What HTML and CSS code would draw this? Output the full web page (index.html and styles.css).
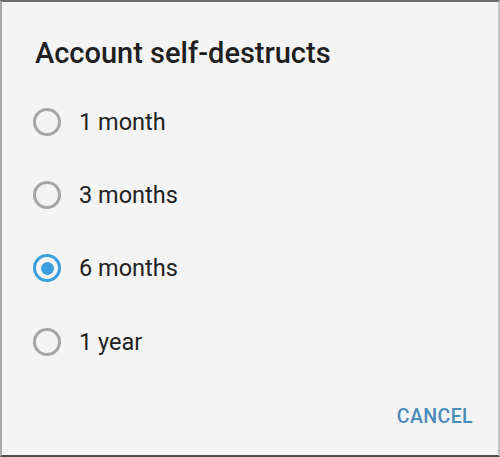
FILE: index.html
```html
<!DOCTYPE html>
<html>
<head>
<meta charset="utf-8">
<link rel="stylesheet" href="styles.css">
</head>
<body>
<div class="dialog">
  <h1 class="title">Account self-destructs</h1>
  <div class="options">
    <div class="option"><span class="radio"></span><span class="label">1 month</span></div>
    <div class="option"><span class="radio"></span><span class="label">3 months</span></div>
    <div class="option"><span class="radio checked"></span><span class="label">6 months</span></div>
    <div class="option"><span class="radio"></span><span class="label">1 year</span></div>
  </div>
  <div class="actions"><span class="btn">CANCEL</span></div>
</div>
</body>
</html>
```
FILE: styles.css
```css
html, body {
  margin: 0;
  padding: 0;
}
body {
  width: 500px;
  height: 457px;
  font-family: Roboto, "Liberation Sans", sans-serif;
  background: #f4f4f4;
}
.dialog {
  box-sizing: border-box;
  width: 500px;
  height: 457px;
  background: #f4f4f4;
  border-top: 2px solid #6a6a6a;
  border-left: 2px solid #a8a8a8;
  border-right: 2px solid #c4c4c4;
  border-bottom: 2px solid #4e4e4e;
  display: flex;
  flex-direction: column;
}
.title {
  margin: 0;
  padding: 34px 0 0 33px;
  font-size: 29px;
  line-height: 34px;
  font-weight: 500;
  color: #1f1f1f;
}
.options {
  margin-top: 15px;
  display: flex;
  flex-direction: column;
}
.option {
  height: 73.3px;
  display: flex;
  align-items: center;
  padding-left: 31px;
}
.radio {
  box-sizing: border-box;
  width: 28px;
  height: 28px;
  border: 3px solid #a6a6a6;
  border-radius: 50%;
  display: flex;
  align-items: center;
  justify-content: center;
  flex: none;
}
.radio.checked {
  border-color: #3a9fdc;
}
.radio.checked::after {
  content: "";
  width: 13px;
  height: 13px;
  border-radius: 50%;
  background: #3a9fdc;
}
.label {
  margin-left: 18px;
  font-size: 23.5px;
  color: #222222;
}
.actions {
  display: flex;
  justify-content: flex-end;
  padding: 27px 25px 0 0;
}
.btn {
  font-size: 19.5px;
  font-weight: 500;
  letter-spacing: 0.4px;
  color: #4a8bba;
}
```
